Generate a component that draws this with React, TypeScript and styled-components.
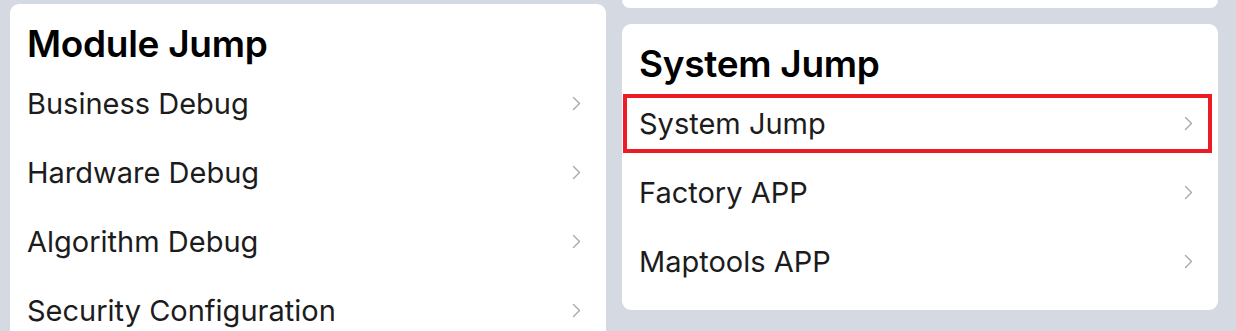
import styled, { createGlobalStyle } from "styled-components";

const GlobalStyle = createGlobalStyle`
  html, body {
    margin: 0;
    padding: 0;
    background: #d5d9e2;
    font-family: Inter, "Noto Sans", sans-serif;
  }
`;

const Page = styled.div`
  width: 1236px;
  height: 331px;
  overflow: hidden;
  display: grid;
  grid-template-columns: 596px 596px;
  column-gap: 16px;
  padding-left: 10px;
  box-sizing: border-box;
`;

const Column = styled.div<{ $offset: number }>`
  display: flex;
  flex-direction: column;
  gap: 16px;
  padding-top: ${({ $offset }) => $offset}px;
`;

const Card = styled.div`
  background: #ffffff;
  border-radius: 9px;
  padding: 16px 17px 14px;
`;

const CardTail = styled.div`
  background: #ffffff;
  height: 8px;
  border-radius: 0 0 9px 9px;
`;

const Title = styled.h2`
  margin: 0 0 1px;
  font-size: 37px;
  line-height: 48px;
  font-weight: 600;
  color: #000;
  letter-spacing: -0.3px;
`;

const Row = styled.div<{ $selected?: boolean }>`
  position: relative;
  height: 69px;
  display: flex;
  align-items: center;
  justify-content: space-between;

  ${({ $selected }) =>
    $selected &&
    `
    &::after {
      content: "";
      position: absolute;
      left: -16px;
      right: -11px;
      top: 5px;
      bottom: 5px;
      border: 4.5px solid #ed1c24;
      pointer-events: none;
    }
  `}
`;

const Label = styled.span`
  font-size: 29px;
  color: #1c1c1c;
`;

const Chevron = styled.svg`
  width: 9px;
  height: 15px;
  margin-right: 8px;
  flex-shrink: 0;
`;

const Arrow = () => (
  <Chevron viewBox="0 0 9 15">
    <path d="M1.5 1.5 L7.5 7.5 L1.5 13.5" fill="none" stroke="#a8a8a8" strokeWidth="1.4" strokeLinecap="round" strokeLinejoin="round" />
  </Chevron>
);

type Section = { title: string; items: string[]; selected?: number };

const moduleJump: Section = {
  title: "Module Jump",
  items: ["Business Debug", "Hardware Debug", "Algorithm Debug", "Security Configuration"],
};

const systemJump: Section = {
  title: "System Jump",
  items: ["System Jump", "Factory APP", "Maptools APP"],
  selected: 0,
};

const JumpCard = ({ section }: { section: Section }) => (
  <Card>
    <Title>{section.title}</Title>
    {section.items.map((item, i) => (
      <Row key={item} $selected={section.selected === i}>
        <Label>{item}</Label>
        <Arrow />
      </Row>
    ))}
  </Card>
);

const App = () => {
  return (
    <>
      <GlobalStyle />
      <Page>
        <Column $offset={4}>
          <JumpCard section={moduleJump} />
        </Column>
        <Column $offset={0}>
          <CardTail />
          <JumpCard section={systemJump} />
        </Column>
      </Page>
    </>
  );
};

export default App;
